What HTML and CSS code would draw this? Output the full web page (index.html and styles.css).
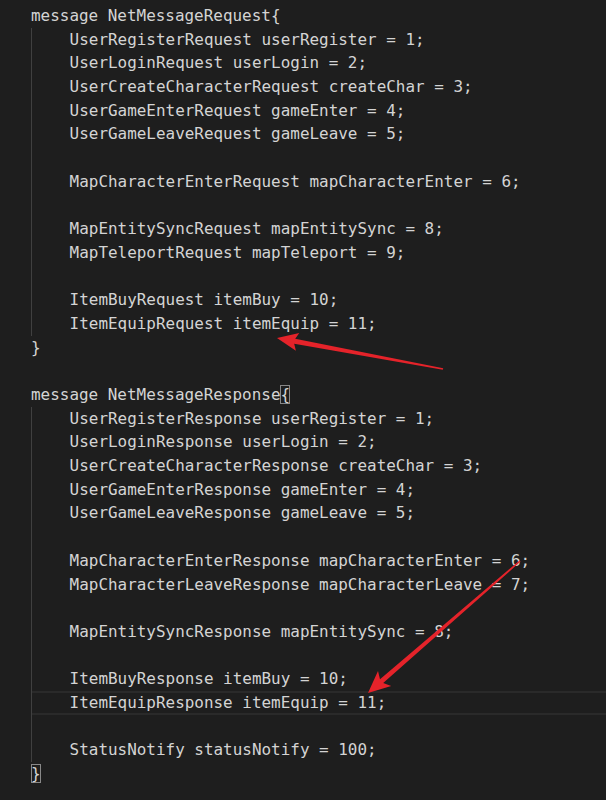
FILE: index.html
```html
<!DOCTYPE html>
<html lang="en">
<head>
  <meta charset="UTF-8" />
  <meta name="viewport" content="width=device-width, initial-scale=1.0"/>
  <title>NetMessage.proto</title>
  <link rel="stylesheet" href="styles.css">
</head>
<body>
  <div class="editor">
    <!-- request block -->
    <div class="line">message NetMessageRequest{</div>
    <div class="block">
      <div class="line">UserRegisterRequest userRegister = 1;</div>
      <div class="line">UserLoginRequest userLogin = 2;</div>
      <div class="line">UserCreateCharacterRequest createChar = 3;</div>
      <div class="line">UserGameEnterRequest gameEnter = 4;</div>
      <div class="line">UserGameLeaveRequest gameLeave = 5;</div>
      <div class="line"> </div>
      <div class="line">MapCharacterEnterRequest mapCharacterEnter = 6;</div>
      <div class="line"> </div>
      <div class="line">MapEntitySyncRequest mapEntitySync = 8;</div>
      <div class="line">MapTeleportRequest mapTeleport = 9;</div>
      <div class="line"> </div>
      <div class="line">ItemBuyRequest itemBuy = 10;</div>
      <div class="line">ItemEquipRequest itemEquip = 11;</div>
    </div>
    <div class="line">}</div>
    <div class="line"> </div>

    <!-- response block -->
    <div class="line">message NetMessageResponse<span class="match">{</span></div>
    <div class="block">
      <div class="line">UserRegisterResponse userRegister = 1;</div>
      <div class="line">UserLoginResponse userLogin = 2;</div>
      <div class="line">UserCreateCharacterResponse createChar = 3;</div>
      <div class="line">UserGameEnterResponse gameEnter = 4;</div>
      <div class="line">UserGameLeaveResponse gameLeave = 5;</div>
      <div class="line"> </div>
      <div class="line">MapCharacterEnterResponse mapCharacterEnter = 6;</div>
      <div class="line">MapCharacterLeaveResponse mapCharacterLeave = 7;</div>
      <div class="line"> </div>
      <div class="line">MapEntitySyncResponse mapEntitySync = 8;</div>
      <div class="line"> </div>
      <div class="line">ItemBuyResponse itemBuy = 10;</div>
      <div class="line current">ItemEquipResponse itemEquip = 11;</div>
      <div class="line"> </div>
      <div class="line">StatusNotify statusNotify = 100;</div>
    </div>
    <div class="line"><span class="match">}</span></div>
  </div>

  <!-- annotation arrows drawn on top of the code -->
  <svg class="arrows" width="606" height="800" viewBox="0 0 606 800">
    <polygon points="443.2,368.2 295.2,338.8 299.3,333 277,338 295.9,350.7 294.2,343.8 442.8,369.8" />
    <polygon points="520.5,561.6 383.2,683.1 391.2,686.1 368,693 378,671 380,679.3 519.5,560.4" />
  </svg>
</body>
</html>
```

FILE: styles.css
```css
body {
  margin: 0;
  padding: 0;
  background: #1e1e1e;
  height: 800px;
  overflow: hidden;
  position: relative;
}

.editor {
  padding: 4px 0 0 31px;
  font-family: 'DejaVu Sans Mono', 'Liberation Mono', monospace;
  font-size: 15.95px;
  line-height: 23.7px;
  color: #d4d4d4;
}

.line {
  white-space: pre;
  height: 23.7px;
}

.block {
  border-left: 1px solid #404040;
  padding-left: 37.6px;
}

.current {
  margin-left: -37.6px;
  padding-left: 37.6px;
  box-shadow: inset 0 2px #2a2a2a, inset 0 -2px #2a2a2a;
}

.match {
  box-shadow: inset 0 0 0 1px #888;
}

.arrows {
  position: absolute;
  top: 0;
  left: 0;
  pointer-events: none;
}

.arrows polygon {
  fill: #e5232a;
}
```
